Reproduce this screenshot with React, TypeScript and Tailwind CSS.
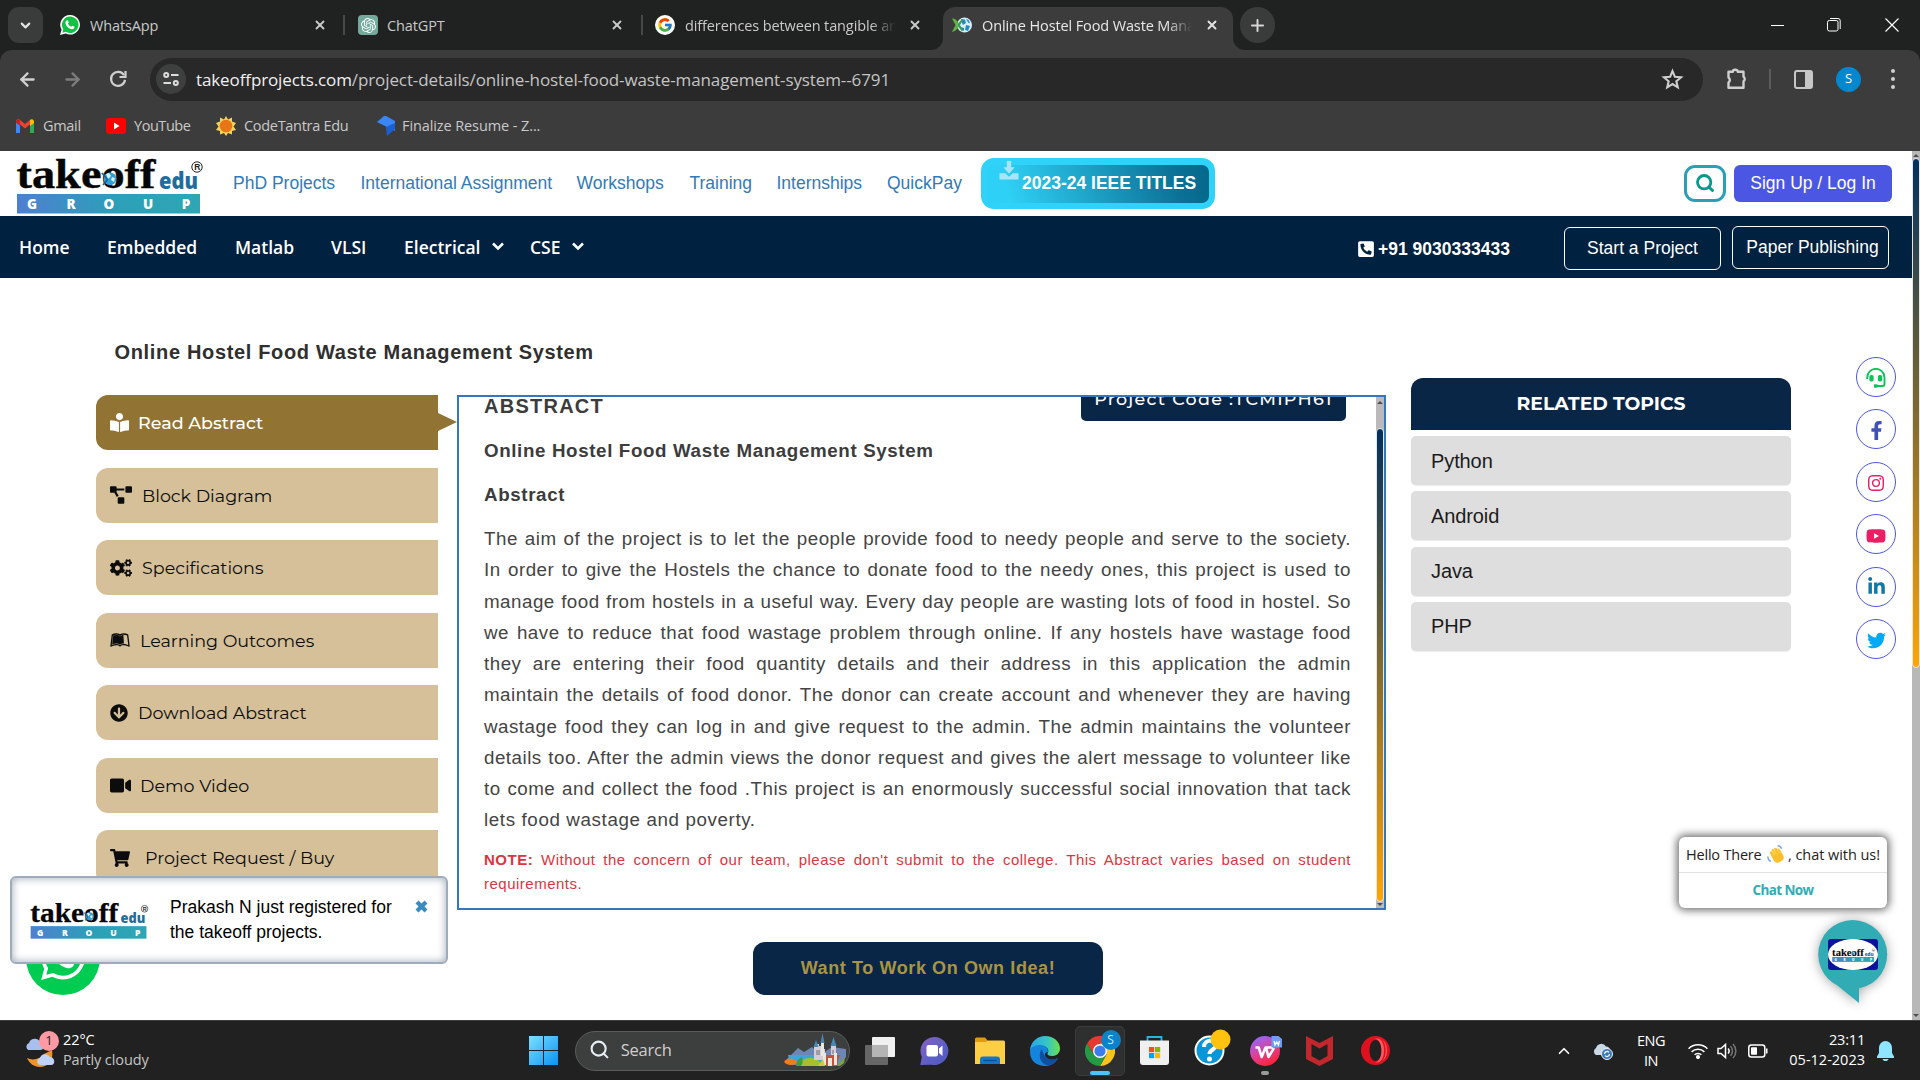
import React from "react";
import {
  FaBookReader,
  FaProjectDiagram,
  FaCogs,
  FaLeanpub,
  FaArrowCircleDown,
  FaVideo,
  FaShoppingCart,
  FaPhoneSquareAlt,
  FaFacebookF,
  FaYoutube,
  FaLinkedinIn,
  FaTwitter,
  FaWhatsapp,
} from "react-icons/fa";
import { BsInstagram } from "react-icons/bs";
import { SiOpenai } from "react-icons/si";
import { FcGoogle } from "react-icons/fc";
import { ArrowLeft, ArrowRight, ChevronDown, ChevronUp, Plus, X, Search } from "lucide-react";

/* ---------- brand drawings ---------- */

function TakeoffLogo({ className, id }: { className: string; id: string }) {
  return (
    <svg viewBox="0 0 188 56" preserveAspectRatio="none" className={className}>
      <defs>
        <linearGradient id={id} x1="0" x2="1">
          <stop offset="0" stopColor="#4f7fd0" />
          <stop offset="0.55" stopColor="#2ba0b8" />
          <stop offset="1" stopColor="#2fa6b4" />
        </linearGradient>
      </defs>
      <text x="0.5" y="30.3" fontFamily="Liberation Serif, serif" fontWeight="700" fontSize="42" fill="#050505" stroke="#050505" strokeWidth="0.4" textLength="139" lengthAdjust="spacingAndGlyphs">takeoff</text>
      <circle cx="94" cy="20.8" r="6.4" fill="#2f9fd6" />
      <path d="M90 16l3-1 2 3-3 3zM96 19l3 1-1 4-3-2z" fill="#d8f2f8" />
      <path d="M86 15l5 6M92 21l-5 6" stroke="#1d5f9a" strokeWidth="1.6" />
      <text x="143" y="30.6" fontFamily="Open Sans, sans-serif" fontWeight="800" fontSize="22" fill="#1f6c9f" textLength="39" lengthAdjust="spacingAndGlyphs">edu</text>
      <circle cx="181" cy="9" r="5.2" fill="none" stroke="#222" strokeWidth="1" />
      <text x="178.2" y="12.2" fontFamily="Liberation Sans, sans-serif" fontSize="8.5" fontWeight="700" fill="#222">R</text>
      <rect x="1" y="36" width="183" height="19.5" fill={`url(#${id})`} />
      <g fontFamily="Open Sans, sans-serif" fontWeight="800" fontSize="13.5" fill="#fff" textAnchor="middle">
        <text x="16" y="50.6">G</text>
        <text x="55" y="50.6">R</text>
        <text x="93" y="50.6">O</text>
        <text x="132" y="50.6">U</text>
        <text x="170" y="50.6">P</text>
      </g>
    </svg>
  );
}

const Globe = () => (
  <svg viewBox="0 0 20 20" className="h-5 w-5">
    <circle cx="12.5" cy="10" r="7.5" fill="#d9f1fa" />
    <path d="M9 4l4 .5 1 3.500-3 2-1-2zM14 10l4 1-2 5-3-1zM14 3.500l3 2 1 3-2-1zM9 12l3 1 0 3-2-1z" fill="#2489c5" />
    <path d="M0 3.500c3 0 5 2 6.500 4.500L5.500 10l1 2C5 14.500 3 16.500 0 17l3.500-7z" fill="#62b246" />
    <path d="M6.500 8L10 4l.8 1.500L8 10l3 5-1 1.500L6.500 12l-1-2z" fill="#3d9a52" />
  </svg>
);

const WhatsAppMark = () => (
  <svg viewBox="0 0 20 20" className="h-5 w-5">
    <path d="M10.200 0a9.800 9.800 0 1 1-4.600 18.500L0 20l1.600-5.300A9.800 9.800 0 0 1 10.200 0z" fill="#fff" />
    <path d="M10.200 1.600a8.200 8.200 0 1 1-4.200 15.200L2.300 17.800l1-3.500A8.200 8.200 0 0 1 10.200 1.600z" fill="#10c143" />
    <path d="M7 5.200c.7-.2 1 .1 1.200.7l.5 1.300c.1.500-.6 1-.8 1.300.7 1.500 1.800 2.500 3.400 3.200.4-.3.800-1 1.200-1l1.700.8c.6.3.2 1.800-.6 2.300-1.600 1-3.700.1-5.500-1.300C6.300 11 5.300 9.300 5.500 7.300c.1-1 .8-1.900 1.500-2.100z" fill="#fff" />
  </svg>
);

const Castle = () => (
  <svg viewBox="0 0 62 36" className="h-9 w-[62px]">
    <path d="M2 27l12-12 6 4 8-5 8 8 12-8 14 2v8l-6 8H6z" fill="#6f86b5" />
    <path d="M4 22h52v8H6z" fill="#3aa6dd" />
    <path d="M14 33c4-10 18-11 26 0z" fill="#a8bf2d" />
    <path d="M12 33c0-5 3-8 6-9 1 4 1 7-1 9z" fill="#3f9d43" />
    <path d="M0 29c4-5 10-4 13 0-2 4-10 4-13 0z" fill="#ee7d20" />
    <path d="M30 14h3v-3h2v2h4v3h2v11H30zM47 13h5v14h-5z" fill="#d3cfd4" />
    <path d="M37 9h3v14h-3z" fill="#ece6e4" />
    <path d="M36.500 10l2-10 2 10zM46.500 13l3-9 3 9zM29.500 14l2.500-7 2.500 7z" fill="#4a88b4" />
    <path d="M41 22h15l-3 11H41z" fill="#c8503f" />
    <path d="M39 20h3v12h-3zM50 20h3v12h-3zM44 25h4v8h-4z" fill="#efe6dd" />
    <path d="M33 17v5M35 17v5M49 17v4" stroke="#6d6c83" strokeWidth="1" />
    <path d="M53 33l8-9-1 6-4 3z" fill="#7ca53a" />
    <path d="M34 33l5-7 2 7z" fill="#d9c63d" />
  </svg>
);

/* ---------- browser chrome ---------- */

const TabText = ({ children, className }: { children: React.ReactNode; className: string }) => (
  <span className={`mt-[2px] block overflow-hidden whitespace-nowrap text-[14.5px] tracking-[-0.12px] ${className}`}>{children}</span>
);

const TabStrip = () => (
  <div className="flex h-[50px] bg-[#1f2221] font-['Open_Sans',sans-serif]">
    <div className="ml-2 mt-[7px] flex h-9 w-[35px] items-center justify-center rounded-[11px] bg-[#3a3b3b]">
      <ChevronDown size={15} strokeWidth={3.4} className="text-[#e3e3e3]" />
    </div>
    <div className="ml-[17px] flex w-[284px] items-center">
      <WhatsAppMark />
      <TabText className="ml-[10px] w-[222px] text-[#c9c9c9]">WhatsApp</TabText>
      <X size={14} strokeWidth={3.2} className="ml-[1px] text-[#c9c9c9]" />
    </div>
    <div className="mt-[15px] h-5 w-[2px] -translate-x-[1px] bg-[#474949]" />
    <div className="ml-[12px] flex w-[284px] items-center">
      <span className="flex h-5 w-5 items-center justify-center rounded-[4px] bg-[#74aa9c]">
        <SiOpenai size={15} className="text-white" />
      </span>
      <TabText className="ml-[9px] w-[223px] text-[#c9c9c9]">ChatGPT</TabText>
      <X size={14} strokeWidth={3.2} className="text-[#c9c9c9]" />
    </div>
    <div className="mt-[15px] h-5 w-[2px] -translate-x-[1px] bg-[#474949]" />
    <div className="ml-[11px] flex w-[276px] items-center">
      <span className="flex h-5 w-5 items-center justify-center rounded-full bg-white">
        <FcGoogle size={16} />
      </span>
      <TabText className="ml-[10px] w-[211px] text-[#c9c9c9] [mask-image:linear-gradient(to_right,black_88%,transparent)]">differences between tangible and intangible</TabText>
      <X size={14} strokeWidth={3.2} className="ml-[12px] text-[#c9c9c9]" />
    </div>
    <div className="mt-[38px] h-3 w-3 bg-[#3c3c3c]">
      <div className="h-3 w-3 rounded-br-[12px] bg-[#1f2221]" />
    </div>
    <div className="mt-[7px] flex w-[290px] items-center rounded-t-[12px] bg-[#3c3c3c] pb-[7px]">
      <div className="ml-[9px]"><Globe /></div>
      <TabText className="ml-[10px] w-[210px] text-[#e8e8e8] [mask-image:linear-gradient(to_right,black_88%,transparent)]">Online Hostel Food Waste Management System</TabText>
      <X size={14} strokeWidth={3.2} className="ml-[13px] text-[#e3e3e3]" />
    </div>
    <div className="mt-[38px] h-3 w-3 bg-[#3c3c3c]">
      <div className="h-3 w-3 rounded-bl-[12px] bg-[#1f2221]" />
    </div>
    <div className="-ml-[5px] mt-[7px] flex h-9 w-[35px] items-center justify-center rounded-full bg-[#3a3b3b]">
      <Plus size={19} strokeWidth={2.500} className="text-[#d5d5d5]" />
    </div>
    <div className="ml-auto mr-[21px] flex items-center text-white">
      <div className="h-px w-[13px] bg-white" />
      <svg viewBox="0 0 14 14" className="ml-[43px] h-[14px] w-[14px]" fill="none" stroke="currentColor">
        <rect x="0.500" y="2.500" width="10.500" height="10.500" rx="1.800" />
        <path d="M3 .5h8a2.200 2.200 0 0 1 2.200 2.200V11" />
      </svg>
      <svg viewBox="0 0 14 14" className="ml-[44px] h-[14px] w-[14px]" stroke="currentColor" strokeWidth="1.200">
        <path d="M.5.5l13 13M13.500.5l-13 13" />
      </svg>
    </div>
  </div>
);

const Toolbar = () => (
  <div className="bg-[#1f2221]">
    <div className="flex h-[58px] items-center rounded-t-[12px] bg-[#3c3c3c] font-['Open_Sans',sans-serif]">
      <ArrowLeft size={21} strokeWidth={2.600} className="ml-[17px] text-[#d0d0d0]" />
      <ArrowRight size={21} strokeWidth={2.600} className="ml-[24px] text-[#7d7d7d]" />
      <svg viewBox="0 0 18 18" className="ml-[26px] h-[18px] w-[18px]" fill="none" stroke="#d0d0d0" strokeWidth="2.200">
        <path d="M15 5.200A7 7 0 1 0 16 9.800" />
        <path d="M16.500 1v6h-6" />
      </svg>
      <div className="ml-[23px] flex h-[43px] w-[1553px] items-center rounded-full bg-[#282828]">
        <div className="ml-[6px] flex h-[30px] w-[30px] items-center justify-center rounded-full bg-[#3e3f3f]">
          <svg viewBox="0 0 16 14" className="h-[14px] w-4" fill="none" stroke="#dcdcdc" strokeWidth="2">
            <circle cx="3.200" cy="3" r="2" />
            <path d="M8 3h7.500M.5 11H8" />
            <circle cx="12.800" cy="11" r="2" />
          </svg>
        </div>
        <span className="ml-[10px] mt-px whitespace-nowrap text-[17px] tracking-[-0.11px] text-[#c4c4c4]">
          <span className="text-[#f0f0f0]">takeoffprojects.com</span>/project-details/online-hostel-food-waste-management-system--6791
        </span>
        <svg viewBox="0 0 24 24" className="ml-auto mr-[19px] h-[23px] w-[23px]" fill="none" stroke="#cfcfcf" strokeWidth="2.200" strokeLinejoin="miter">
          <path d="M12 3.200l2.500 6 6.400.5-4.900 4.200 1.500 6.300-5.500-3.400-5.500 3.400L8 13.900 3.100 9.700l6.400-.5z" />
        </svg>
      </div>
      <svg viewBox="0 0 22 22" className="ml-[23px] h-[22px] w-[22px]" fill="none" stroke="#cfcfcf" strokeWidth="2.400" strokeLinejoin="round">
        <path d="M2.500 3.700h4.300a2.500 2 0 0 1 5 0h5.700v5a2 2.500 0 0 1 0 4.600v6.500h-15v-5.300a3 3 0 0 0 0-5z" />
      </svg>
      <div className="ml-[21px] h-5 w-[2px] bg-[#5c5c5c]" />
      <div className="ml-[23px] h-[19px] w-[19px] rounded-[3px] border-[2.500px] border-r-[8px] border-[#c7c7c7]" />
      <div className="ml-[23px] flex h-[25px] w-[25px] items-center justify-center rounded-full bg-[#0288d1] text-[13px] text-white">S</div>
      <div className="ml-[30px] flex flex-col gap-1">
        <i className="h-1 w-1 rounded-full bg-[#d0d0d0]" />
        <i className="h-1 w-1 rounded-full bg-[#d0d0d0]" />
        <i className="h-1 w-1 rounded-full bg-[#d0d0d0]" />
      </div>
    </div>
  </div>
);

const Bookmarks = () => (
  <div className="flex h-[43px] items-center bg-[#3c3c3c] pb-[7px] font-['Open_Sans',sans-serif] text-[14.5px] tracking-[-0.3px] text-[#c9c9c9]">
    <svg viewBox="0 0 18 14" className="ml-4 h-[14px] w-[18px]">
      <path d="M0 2v12h4V5z" fill="#4285f4" />
      <path d="M18 2v12h-4V5z" fill="#34a853" />
      <path d="M0 2.500C0 .5 2-.5 3.500.6L9 5l5.500-4.400C16 .5 14 1 14 2v3.500L9 9.500 4 5.500 0 2.500z" fill="#ea4335" />
      <path d="M14 1c2-1.800 4-.4 4 1.500V4l-4 3z" fill="#fbbc04" />
      <path d="M0 2.500C0 .5 2-.5 4 1v5.500L0 3.800z" fill="#c5221f" />
    </svg>
    <span className="ml-[9px] w-[63px]">Gmail</span>
    <svg viewBox="0 0 20 14" className="h-4 w-5" preserveAspectRatio="none"><rect width="20" height="14" rx="3" fill="#f00" /><path d="M8 4l5.500 3L8 10z" fill="#fff" /></svg>
    <span className="ml-2 w-[82px] tracking-[-0.45px]">YouTube</span>
    <svg viewBox="0 0 20 20" className="h-5 w-5">
      <path d="M10 0l2 3.500L16 1.500l0 4L20 7l-2.500 3.500L20 14l-4 1 0 3.500-4-1.500-2 3-2-3-4 1.500 0-3.500-4-1 2.500-3.500L0 7l4-1.500-.0-4L8 3.500z" fill="#f3d35b" />
      <circle cx="10" cy="10" r="6.300" fill="#e87516" />
    </svg>
    <span className="ml-2 w-[132px]">CodeTantra Edu</span>
    <svg viewBox="0 0 18 20" className="ml-px h-5 w-[18px]">
      <path d="M7 0h2l9 5v10L0 6z" fill="#3b86f7" />
      <path d="M9 11l9-4v6l-8 7z" fill="#1b5fd0" />
    </svg>
    <span className="ml-[7px] tracking-[-0.1px]">Finalize Resume - Z...</span>
  </div>
);

/* ---------- site header ---------- */

const SiteHeader = () => (
  <div className="flex h-[65px] items-center bg-white text-[17.5px] text-[#337ab7]">
    <TakeoffLogo id="lgA" className="ml-4 mt-[5px] h-[56px] w-[188px]" />
    <span className="ml-[29px] w-[127.500px]">PhD Projects</span>
    <span className="w-[216px]">International Assignment</span>
    <span className="w-[113px]">Workshops</span>
    <span className="w-[87px]">Training</span>
    <span className="w-[110.500px]">Internships</span>
    <span className="w-[94px]">QuickPay</span>
    <div className="flex h-[51px] w-[234px] items-center rounded-[13px] bg-[#2fd3f9] p-[6px]">
      <div className="relative flex h-[38px] w-full items-center rounded-[7px] bg-[linear-gradient(75deg,#2fd0f5_10%,#0b7095_85%,#04678c)] pl-[35px] text-[17.5px] font-bold text-white">
        <svg viewBox="0 0 20 20" className="absolute -top-[4px] left-[12px] h-[19px] w-5" fill="#a8e6f7">
          <path d="M7.700 0h4.600v6.500H16L10 13.500 4 6.500h3.700zM0 13h6l4 3.500 4-3.500h6v6.500H0z" />
        </svg>
        <span className="whitespace-nowrap">2023-24 IEEE TITLES</span>
      </div>
    </div>
    <div className="ml-auto flex h-[37px] w-[42px] items-center justify-center rounded-[11px] border-[3px] border-[#2b9fb7]">
      <Search size={20} strokeWidth={3.400} className="-mt-[2px] text-[#079a8c]" />
    </div>
    <div className="ml-2 mr-[20px] flex h-[37px] w-[158px] items-center justify-center rounded-[6px] bg-[#4b57e2] text-white">Sign Up / Log In</div>
  </div>
);

const NavCaret = () => (
  <svg viewBox="0 0 12 9" className="mb-[2px] h-[9px] w-3" fill="none" stroke="#fff" strokeWidth="2.600">
    <path d="M1 1.500l5 5 5-5" />
  </svg>
);

const NavBar = () => (
  <div className="flex h-[62px] bg-[#002140] text-[17.5px] text-white">
    <div className="flex items-center pl-[19px] font-['Open_Sans',sans-serif] font-semibold">
      <span className="w-[88px]">Home</span>
      <span className="w-[128px]">Embedded</span>
      <span className="w-[96px]">Matlab</span>
      <span className="w-[73px]">VLSI</span>
      <span className="w-[87.500px]">Electrical</span>
      <NavCaret />
      <span className="ml-[26.500px] w-[41.500px]">CSE</span>
      <NavCaret />
    </div>
    <div className="ml-auto mr-[23px] flex h-full items-center">
      <FaPhoneSquareAlt size={18} className="mt-[3px]" />
      <span className="ml-[3px] mt-[5px] w-[186px] whitespace-nowrap font-bold">+91 9030333433</span>
      <div className="mt-[2px] flex h-[43px] w-[157px] items-center justify-center rounded-[6px] border border-white">Start a Project</div>
      <div className="ml-[11px] flex h-[43px] w-[157px] items-center justify-center rounded-[6px] border border-white pl-[4px]">Paper Publishing</div>
    </div>
  </div>
);

/* ---------- content ---------- */

const sideTabs = [
  { icon: FaBookReader, label: "Read Abstract", size: 19, gap: "w-[28px]" },
  { icon: FaProjectDiagram, label: "Block Diagram", size: 22, gap: "w-[32px]" },
  { icon: FaCogs, label: "Specifications", size: 22, gap: "w-[32px]" },
  { icon: FaLeanpub, label: "Learning Outcomes", size: 20, gap: "w-[30px]" },
  { icon: FaArrowCircleDown, label: "Download Abstract", size: 18, gap: "w-[28px]" },
  { icon: FaVideo, label: "Demo Video", size: 21, gap: "w-[30px]" },
  { icon: FaShoppingCart, label: "Project Request / Buy", size: 20, gap: "w-[35px]" },
];

const SideTabs = () => (
  <div className="mt-[17px] flex w-[342px] flex-col gap-[17.500px] font-['Montserrat',Inter,sans-serif] text-[17.5px]">
    {sideTabs.map(({ icon: Icon, label, size, gap }, i) => (
      <div
        key={label}
        className={`relative flex h-[55px] shrink-0 items-center rounded-l-[12px] pl-[14px] ${i === 0 ? "bg-[#917334] font-medium text-white" : "bg-[#d5c09a] text-[#0c0c0c]"}`}
      >
        <span className={`flex items-center ${gap}`}><Icon size={size} /></span>
        <span className="mt-[2px] whitespace-nowrap">{label}</span>
        {i === 0 && <span className="absolute left-full top-[18px] border-y-[9px] border-l-[19px] border-y-transparent border-l-[#917334]" />}
      </div>
    ))}
  </div>
);

const lines = [
  "The aim of the project is to let the people provide food to needy people and serve to the society.",
  "In order to give the Hostels the chance to donate food to the needy ones, this project is used to",
  "manage food from hostels in a useful way. Every day people are wasting lots of food in hostel. So",
  "we have to reduce that food wastage problem through online. If any hostels have wastage food",
  "they are entering their food quantity details and their address in this application the admin",
  "maintain the details of food donor. The donor can create account and whenever they are having",
  "wastage food they can log in and give request to the admin. The admin maintains the volunteer",
  "details too. After the admin views the donor request and gives the alert message to volunteer like",
  "to come and collect the food .This project is an enormously successful social innovation that tack",
];

const AbstractPanel = () => (
  <div className="flex h-[515px] w-[929px] overflow-hidden border-2 border-[#3577bf] bg-white text-[18.75px] tracking-[0.5px] text-[#444]">
    <div className="relative w-[892px] pl-[25px]">
      <div className="absolute -top-[24px] right-0 mr-[5px] flex h-[48px] w-[265px] justify-center rounded-[5px] bg-[#0a2647] pt-[9px] font-['Montserrat',Inter,sans-serif] text-[17.5px] leading-[34px] font-medium tracking-[1.25px] whitespace-nowrap text-white">
        Project Code :TCMIPH61
      </div>
      <div className="-mt-[6px] h-[30px] text-[20px] font-bold leading-[30px] tracking-[1.25px] text-[#3c3c3c]">ABSTRACT</div>
      <div className="mt-[14px] h-[31px] font-bold leading-[31px] tracking-[0.625px] text-[#3c3c3c]">Online Hostel Food Waste Management System</div>
      <div className="mt-[13px] h-[31px] font-bold leading-[31px] tracking-[0.625px] text-[#3c3c3c]">Abstract</div>
      <div className="mt-[13px] w-[867px] leading-[31.25px]">
        {lines.map((l) => (
          <span key={l} className="block whitespace-nowrap text-justify [text-align-last:justify]">{l}</span>
        ))}
        <span className="block tracking-[0.625px]">lets food wastage and poverty.</span>
      </div>
      <div className="mt-[12px] w-[867px] text-[15px] leading-6 text-[#d9363e]">
        <span className="block whitespace-nowrap text-justify [text-align-last:justify]">
          <b>NOTE:</b> Without the concern of our team, please don't submit to the college. This Abstract varies based on student
        </span>
        <span className="block">requirements.</span>
      </div>
    </div>
    <div className="ml-auto flex w-[8px] flex-col items-center bg-[#bababa]">
      <i className="mt-[4px] border-x-[3px] border-b-[3px] border-x-transparent border-b-[#505050]" />
      <div className="mt-[24px] h-[474px] w-full rounded-full border border-[#e6e6e6] bg-[linear-gradient(#00305f,#ffa500)]" />
      <i className="mt-[1px] border-x-[3px] border-t-[3px] border-x-transparent border-t-[#505050]" />
    </div>
  </div>
);

const topics = ["Python", "Android", "Java", "PHP"];

const Related = () => (
  <div className="w-[380px]">
    <div className="flex h-[52px] items-center justify-center rounded-t-[12px] bg-[#0a2647] font-['Montserrat',Inter,sans-serif] text-[18.75px] font-bold text-white">RELATED TOPICS</div>
    <div className="mt-[6px] flex flex-col gap-[6.300px]">
      {topics.map((t) => (
        <div key={t} className="flex h-[49px] items-center rounded-[5px] bg-[#dedede] pl-[20px] text-[20px] tracking-[-0.1px] text-[#1b1b1b] shadow-[0_1px_1px_rgba(0,0,0,0.08)]">{t}</div>
      ))}
    </div>
  </div>
);

const Ring = ({ children }: { children: React.ReactNode }) => (
  <div className="flex h-[40px] w-[40px] items-center justify-center rounded-full border border-[#4b57e2] bg-white">{children}</div>
);

const Social = () => (
  <div className="absolute right-[16px] top-[79px] flex flex-col gap-[12.400px]">
    <Ring>
      <svg viewBox="0 0 20 20" className="mt-px h-5 w-5" fill="none" stroke="#0cc35a" strokeWidth="1.900">
        <path d="M1.200 11V9.500a8.500 8.500 0 0 1 17.300 0V16a2 2 0 0 1-2 2H10" />
        <rect x="4.300" y="8" width="2.400" height="4.500" rx="0.800" fill="#0cc35a" />
        <rect x="12.800" y="8" width="2.400" height="4.500" rx="0.800" fill="#0cc35a" />
        <path d="M8 18h3.500" strokeWidth="3.400" />
      </svg>
    </Ring>
    <Ring><FaFacebookF size={19} className="mt-[3px] text-[#3f51b5]" /></Ring>
    <Ring><BsInstagram size={16} className="mt-[2px] text-[#e91e63]" /></Ring>
    <Ring><FaYoutube size={20} className="mt-[3px] text-[#e91e63]" /></Ring>
    <Ring><FaLinkedinIn size={19} className="text-[#0e76a8]" /></Ring>
    <Ring><FaTwitter size={19} className="mt-[3px] text-[#03a9f4]" /></Ring>
  </div>
);

const RegisteredToast = () => (
  <div className="absolute left-[10px] top-[598px] flex h-[88px] w-[438px] rounded-[6px] border-2 border-[#9eabba] bg-white shadow-[inset_0_0_8px_rgba(90,110,135,0.600)]">
    <TakeoffLogo id="lgB" className="ml-[18px] mt-[25px] h-[36px] w-[119px]" />
    <p className="ml-[21px] mt-[17px] w-[245px] whitespace-nowrap text-[17.5px] leading-[25px] text-black">
      Prakash N just registered for
      <br />
      the takeoff projects.
    </p>
    <svg viewBox="0 0 13 13" className="mt-[22px] h-[13px] w-[13px]"><path d="M2 2l9 9M11 2l-9 9" stroke="#3a8bbf" strokeWidth="4.200" /></svg>
  </div>
);

const ChatWidget = () => (
  <>
    <div className="absolute right-[25px] top-[559px] h-[71px] w-[208px] rounded-[6px] bg-white font-['Open_Sans',sans-serif] shadow-[0_0_8px_2px_rgba(0,0,0,0.600)]">
      <div className="flex h-[36px] items-center border-b border-[#e2e2e2] pl-[7px] text-[14.5px] tracking-[-0.2px] text-[#222]">
        <span className="w-[81px]">Hello There</span>
        <svg viewBox="0 0 18 18" className="-mt-[2px] h-[18px] w-[18px]">
          <g transform="rotate(-28 10 11)">
            <rect x="5" y="4" width="2.700" height="9" rx="1.300" fill="#fcbf2c" />
            <rect x="7.800" y="2.500" width="2.700" height="9" rx="1.300" fill="#fdc93a" />
            <rect x="10.600" y="3" width="2.700" height="9" rx="1.300" fill="#fcbf2c" />
            <rect x="13.300" y="5" width="2.400" height="8" rx="1.200" fill="#fdc93a" />
            <rect x="5" y="9" width="10.700" height="8.500" rx="4" fill="#fcbf2c" />
          </g>
          <path d="M10.500.8c2 0 3.500 1 4 3M.8 11.500c0 2.500 1 4 3 5" stroke="#7ca7e8" strokeWidth="1.400" fill="none" />
        </svg>
        <span className="ml-[3px] whitespace-nowrap tracking-[-0.05px]">, chat with us!</span>
      </div>
      <div className="flex h-[34px] items-center justify-center text-[13.500px] font-bold tracking-[-0.600px] text-[#31acb5]">Chat Now</div>
    </div>
    <svg viewBox="0 0 110 110" className="absolute right-[4px] top-[631px] h-[110px] w-[110px] drop-shadow-[0_1px_6px_rgba(0,0,0,0.350)]">
      <circle cx="54.700" cy="45.500" r="34.500" fill="#31acb5" />
      <path d="M35 73l26 21V73z" fill="#31acb5" />
    </svg>
    <div className="absolute right-[34px] top-[661px] h-[31px] w-[50px] overflow-hidden rounded-[3px] bg-[#0b129c]">
      <div className="flex h-full w-full items-center justify-center rounded-[50%] bg-white">
        <TakeoffLogo id="lgC" className="h-[14px] w-[43px]" />
      </div>
    </div>
  </>
);

const Content = () => (
  <main className="relative h-[742px] flex-1 overflow-hidden bg-white">
    <div className="flex h-full flex-col">
      <h1 className="ml-[114.500px] mt-[59px] h-[30px] whitespace-nowrap text-[20px] font-bold leading-[30px] tracking-[0.66px] text-[#2f2f2f]">Online Hostel Food Waste Management System</h1>
      <div className="ml-[96px] mt-[11px] flex h-[532px] items-start">
        <SideTabs />
        <div className="ml-[19px] mt-[17px]"><AbstractPanel /></div>
        <div className="ml-[25px]"><Related /></div>
      </div>
      <div className="ml-[753px] mt-[32px] flex h-[53px] w-[350px] items-center justify-center rounded-[12px] bg-[#0a2647] text-[18px] font-bold tracking-[0.6px] text-[#ab9440]">
        Want To Work On Own Idea!
      </div>
    </div>
    <Social />
    <div className="absolute left-[25.500px] top-[643px] flex h-[74px] w-[74px] items-center justify-center rounded-full bg-[#00cc52]">
      <FaWhatsapp size={50} className="text-white" />
    </div>
    <RegisteredToast />
    <ChatWidget />
  </main>
);

/* ---------- taskbar ---------- */

const ChromeIcon = () => (
  <svg viewBox="0 0 30 30" className="h-[30px] w-[30px]">
    <path d="M2 7.500A15 15 0 0 1 28 7.500L15 8 8.500 18z" fill="#e33b2e" />
    <path d="M28 7.500A15 15 0 0 1 15 30l6.500-11.500L15 7.500z" fill="#fcc31e" />
    <path d="M15 30A15 15 0 0 1 2 7.500L8.700 18.500 21.300 19z" fill="#249a47" />
    <circle cx="15" cy="15" r="7" fill="#fff" />
    <circle cx="15" cy="15" r="5.600" fill="#3b7ded" />
  </svg>
);

const Taskbar = () => (
  <div className="flex h-[60px] items-center border-t border-[#3c3f3f] bg-[#202120] font-['Open_Sans',sans-serif] text-[14.500px] text-white">
    <div className="relative ml-[25px] h-[36px] w-[34px]">
      <svg viewBox="0 0 34 36" className="h-full w-full">
        <path d="M2 25c6 3 13 1 17-4l8-4c2 10-4 17-12 17-6 0-11-4-13-9z" fill="#f0952b" />
        <path d="M3 17a4 4 0 0 1 1-7 6 6 0 0 1 11-1c4 0 6 7 1 8z" fill="#a9c0ee" />
        <path d="M15 32a3.600 3.600 0 0 1 0-7 5.500 5.500 0 0 1 10-1c5 0 6 8 1 8z" fill="#bfd2f7" />
      </svg>
      <span className="absolute left-[14px] -top-[2px] flex h-5 w-5 items-center justify-center rounded-full bg-[#ff99a4] text-[13px] text-[#222]">1</span>
    </div>
    <div className="-mt-px ml-[4px] flex flex-col leading-5 tracking-[-0.100px]">
      <span>22°C</span>
      <span className="whitespace-nowrap text-[#c6c6c6]">Partly cloudy</span>
    </div>
    <svg viewBox="0 0 29 29" className="ml-[380px] h-[29px] w-[29px]">
      <defs><linearGradient id="win" x1="0" y1="0" x2="1" y2="1"><stop offset="0" stopColor="#7be0ff" /><stop offset="1" stopColor="#0a92f5" /></linearGradient></defs>
      <path d="M0 0h14v14H0zM15 0h14v14H15zM0 15h14v14H0zM15 15h14v14H15z" fill="url(#win)" />
    </svg>
    <div className="ml-[17px] flex h-[40px] w-[275px] items-center rounded-full border border-[#5b5b5b] bg-[#3d3e3e]">
      <Search size={21} strokeWidth={2.400} className="ml-[13px] -mt-[2px] text-[#e6eef5]" />
      <span className="ml-[11px] text-[16.500px] tracking-[-0.200px] text-[#cfcfcf]">Search</span>
      <div className="ml-auto mr-[3px]"><Castle /></div>
    </div>
    <svg viewBox="0 0 30 28" className="ml-[15px] h-[28px] w-[30px]">
      <rect x="7" width="23" height="20" rx="1" fill="#f0f0f0" />
      <rect y="8" width="23" height="20" rx="1" fill="#666" />
      <path d="M7 8h16v12H7z" fill="#b5b5b5" />
    </svg>
    <svg viewBox="0 0 29 28" className="ml-[25px] h-[28px] w-[29px]">
      <defs><linearGradient id="teams" x1="0" y1="0" x2="1" y2="1"><stop offset="0" stopColor="#8a62c0" /><stop offset="0.600" stopColor="#5b5fc7" /><stop offset="1" stopColor="#5156b8" /></linearGradient></defs>
      <path d="M14.500 0a14 14 0 1 1-3 27.700L.3 28l1.500-8A14 14 0 0 1 14.500 0z" fill="url(#teams)" />
      <rect x="6.500" y="8" width="11.500" height="11.500" rx="2" fill="#fff" />
      <path d="M19 11.500l3.500-3v10.500l-3.500-3z" fill="#fff" />
    </svg>
    <svg viewBox="0 0 30 27" className="ml-[26px] h-[27px] w-[30px]">
      <path d="M0 2a1.500 1.500 0 0 1 1.500-1.500H10l3 3.500v4H0z" fill="#e09b10" />
      <path d="M0 5h11l2-1.500h15.500A1.500 1.500 0 0 1 30 5v22H0z" fill="#fcce45" />
      <path d="M5 27v-4.500A3 3 0 0 1 8 19.500h14a3 3 0 0 1 3 3V27z" fill="#1277c9" />
      <path d="M8.500 23.500h13" stroke="#0a4e93" strokeWidth="1.300" />
    </svg>
    <svg viewBox="0 0 30 30" className="ml-[25px] h-[30px] w-[30px]">
      <defs>
        <linearGradient id="edgeA"><stop offset="0" stopColor="#2ba6e8" /><stop offset="0.550" stopColor="#33c5c9" /><stop offset="1" stopColor="#6ee04a" /></linearGradient>
      </defs>
      <path d="M0 16C0 7 7 6 12 8c5 2 6 5 6 8-4 0-4 5 0 7 4 2 8 0 10-1-3 6-8 8-13 8C7 30 0 25 0 16z" fill="#1484dc" />
      <path d="M0 14C1 5 8 0 15 0c9 0 15 6 15 12.500 0 5-4 7.500-8 7.500-3 0-5-1-4.500-2.500 2.500-3-.5-8.500-7-8.500C5 9 1.500 11 0 14z" fill="url(#edgeA)" />
      <path d="M12 13c-4 4-3 15 6 16.500 4-.5 8-3.500 10-7.500-5 3-14 2-16-9z" fill="#0e4fa0" />
    </svg>
    <div className="relative ml-[15px] flex h-[50px] w-[50px] items-center justify-center rounded-[5px] border border-[#3a3b3b] bg-[#2e2f2f]">
      <ChromeIcon />
      <span className="absolute left-[25px] top-[3px] flex h-5 w-5 items-center justify-center rounded-full bg-[#0a84c8] text-[12px] text-[#cfe8f5]">S</span>
      <span className="absolute bottom-0 left-[14px] h-1 w-5 rounded-full bg-[#4cc2ff]" />
    </div>
    <svg viewBox="0 0 29 29" className="ml-[15px] h-[29px] w-[29px]">
      <path d="M7.500 6V1h14v5" stroke="#29b4e0" strokeWidth="1.800" fill="none" />
      <path d="M0 4.500h29V26a3 3 0 0 1-3 3H3a3 3 0 0 1-3-3z" fill="#f0f0f0" />
      <path d="M9 11h5.200v5.200H9z" fill="#f25022" /><path d="M15 11h5.200v5.200H15z" fill="#7fba00" />
      <path d="M9 17h5.200v5.200H9z" fill="#00a4ef" /><path d="M15 17h5.200v5.200H15z" fill="#ffb900" />
    </svg>
    <svg viewBox="0 0 37 37" className="ml-[25px] -mt-[6px] h-[37px] w-[37px]">
      <circle cx="15.500" cy="21.500" r="14" fill="#0896d8" stroke="#fff" strokeWidth="2" />
      <path d="M10 18c0-8 11.500-8 11.500-1.500 0 4.500-6 4-6 8.500" stroke="#fff" strokeWidth="4" fill="none" />
      <circle cx="15.500" cy="30" r="2.500" fill="#fff" />
      <circle cx="26.500" cy="10.500" r="10" fill="#ffc20e" />
    </svg>
    <div className="relative ml-[19px] h-[30px] w-[33px]">
      <svg viewBox="0 0 33 31" className="h-[31px] w-[33px]">
        <defs><linearGradient id="wps" x1="0.200" y1="0" x2="0.700" y2="1"><stop offset="0" stopColor="#8a6bff" /><stop offset="0.500" stopColor="#e0409a" /><stop offset="1" stopColor="#ff2030" /></linearGradient></defs>
        <circle cx="15" cy="15" r="15" fill="url(#wps)" />
        <path d="M5.500 11.500h3.200l3 9.500 3.800-9.500h7.500M16 11.500L18.500 21l5.500-9" stroke="#fff" strokeWidth="2.500" fill="none" strokeLinejoin="round" />
        <path d="M21.500 0h7l3.500 3v8.500H21.500z" fill="#6f9df3" />
        <path d="M24 5l1 4 1.700-3 1.700 3 1-4" stroke="#fff" strokeWidth="1.300" fill="none" />
      </svg>
      <span className="absolute -bottom-[9px] left-[11px] h-1 w-2 rounded-full bg-[#9a9a9a]" />
    </div>
    <svg viewBox="0 0 27 30" className="ml-[23px] h-[30px] w-[27px]">
      <path d="M0 0l13.500 7L27 0v23l-13.500 7L0 23zM5.500 8v12l8 4.500 8-4.500V8l-8 4.500z" fill="#c1272d" fillRule="evenodd" />
    </svg>
    <svg viewBox="0 0 29 29" className="ml-[28px] h-[29px] w-[29px]">
      <path d="M14.500 0a14.500 14.500 0 1 1 0 29 14.500 14.500 0 0 1 0-29zM14.500 4c-3.500 0-6 4.500-6 10.500s2.500 10.500 6 10.500 6-4.500 6-10.500S18 4 14.500 4z" fill="#e0101f" fillRule="evenodd" />
      <path d="M14 3c5-2 9 3 9 11.500S19 28 14 26c3 .5 6.500-4 6.500-11.500S17 2.500 14 3zM18 1.500A14.500 14.500 0 0 1 18 27.500c9-3 9-23 0-26z" fill="#ff5a5f" />
    </svg>
    <div className="ml-auto flex items-center">
      <ChevronUp size={18} strokeWidth={2.200} />
      <svg viewBox="0 0 22 18" className="ml-[19px] h-[18px] w-[22px]">
        <path d="M4 13a4 4 0 0 1 0-7 5.500 5.500 0 0 1 10-1.500 4 4 0 0 1 4 4.500v4z" fill="#c9d9e8" />
        <circle cx="15" cy="12" r="5.500" fill="#3c78b8" stroke="#e8f0f8" strokeWidth="1" />
        <path d="M12.500 12a2.500 2.500 0 0 1 4.500-1.500M17.500 12a2.500 2.500 0 0 1-4.500 1.500" stroke="#fff" strokeWidth="1.200" fill="none" />
      </svg>
      <div className="ml-[22px] flex w-[30px] flex-col items-center leading-[20px] tracking-[-0.500px]">
        <span>ENG</span>
        <span>IN</span>
      </div>
      <svg viewBox="0 0 20 16" className="ml-[22px] h-4 w-5" fill="none" stroke="#fff" strokeWidth="1.500">
        <path d="M.6 5.800a13.200 13.200 0 0 1 18.800 0M3.600 8.900a9 9 0 0 1 12.800 0M6.600 11.800a4.800 4.800 0 0 1 6.800 0" />
        <circle cx="10" cy="14" r="1.300" fill="#fff" />
      </svg>
      <svg viewBox="0 0 21 18" className="ml-[9px] h-[18px] w-[21px]" fill="none" strokeWidth="1.500">
        <path d="M1 6.500v5h3l4.500 4V2.500L4 6.500z" stroke="#fff" />
        <path d="M11 6.500a3.600 3.600 0 0 1 0 5" stroke="#fff" />
        <path d="M13.500 4.300a6.600 6.600 0 0 1 0 9.400M16 2a10 10 0 0 1 0 14" stroke="#777" />
      </svg>
      <svg viewBox="0 0 20 14" className="ml-[10px] h-[14px] w-5">
        <rect x="0.800" y="1" width="16" height="12" rx="2.500" fill="none" stroke="#fff" strokeWidth="1.500" />
        <rect x="3" y="3.200" width="6" height="7.600" rx="0.800" fill="#fff" />
        <path d="M18 4.500h1.500v5H18z" fill="#fff" />
      </svg>
      <div className="-mt-px ml-[20px] flex w-[77px] flex-col items-end leading-[20px] whitespace-nowrap">
        <span className="tracking-[-0.200px]">23:11</span>
        <span>05-12-2023</span>
      </div>
      <svg viewBox="0 0 17 20" className="ml-[12px] mr-[26px] h-5 w-[17px]" fill="#8fe5ff">
        <path d="M8.500 0a6.500 6.500 0 0 1 6.500 6.500V12l2 3.500V17H0v-1.500L2 12V6.500A6.500 6.500 0 0 1 8.500 0zM5.500 18h6c-.5 1.500-1.500 2-3 2s-2.500-.5-3-2z" />
      </svg>
    </div>
  </div>
);

export default function App() {
  return (
    <div className="flex h-[1080px] w-[1920px] flex-col overflow-hidden bg-white font-['Liberation_Sans',Arial,sans-serif]">
      <TabStrip />
      <Toolbar />
      <Bookmarks />
      <div className="flex h-[869px]">
        <div className="flex w-[1912px] flex-col">
          <SiteHeader />
          <NavBar />
          <Content />
        </div>
        <div className="flex w-[8px] flex-col items-center bg-[#b8b8b8]">
          <i className="mt-[3px] border-x-[3px] border-b-[3px] border-x-transparent border-b-[#505050]" />
          <div className="mt-px h-[510px] w-full rounded-full border border-[#e6e6e6] bg-[linear-gradient(#00305f,#ffa500)]" />
          <i className="mb-[3px] mt-auto border-x-[3px] border-t-[3px] border-x-transparent border-t-[#505050]" />
        </div>
      </div>
      <Taskbar />
    </div>
  );
}
